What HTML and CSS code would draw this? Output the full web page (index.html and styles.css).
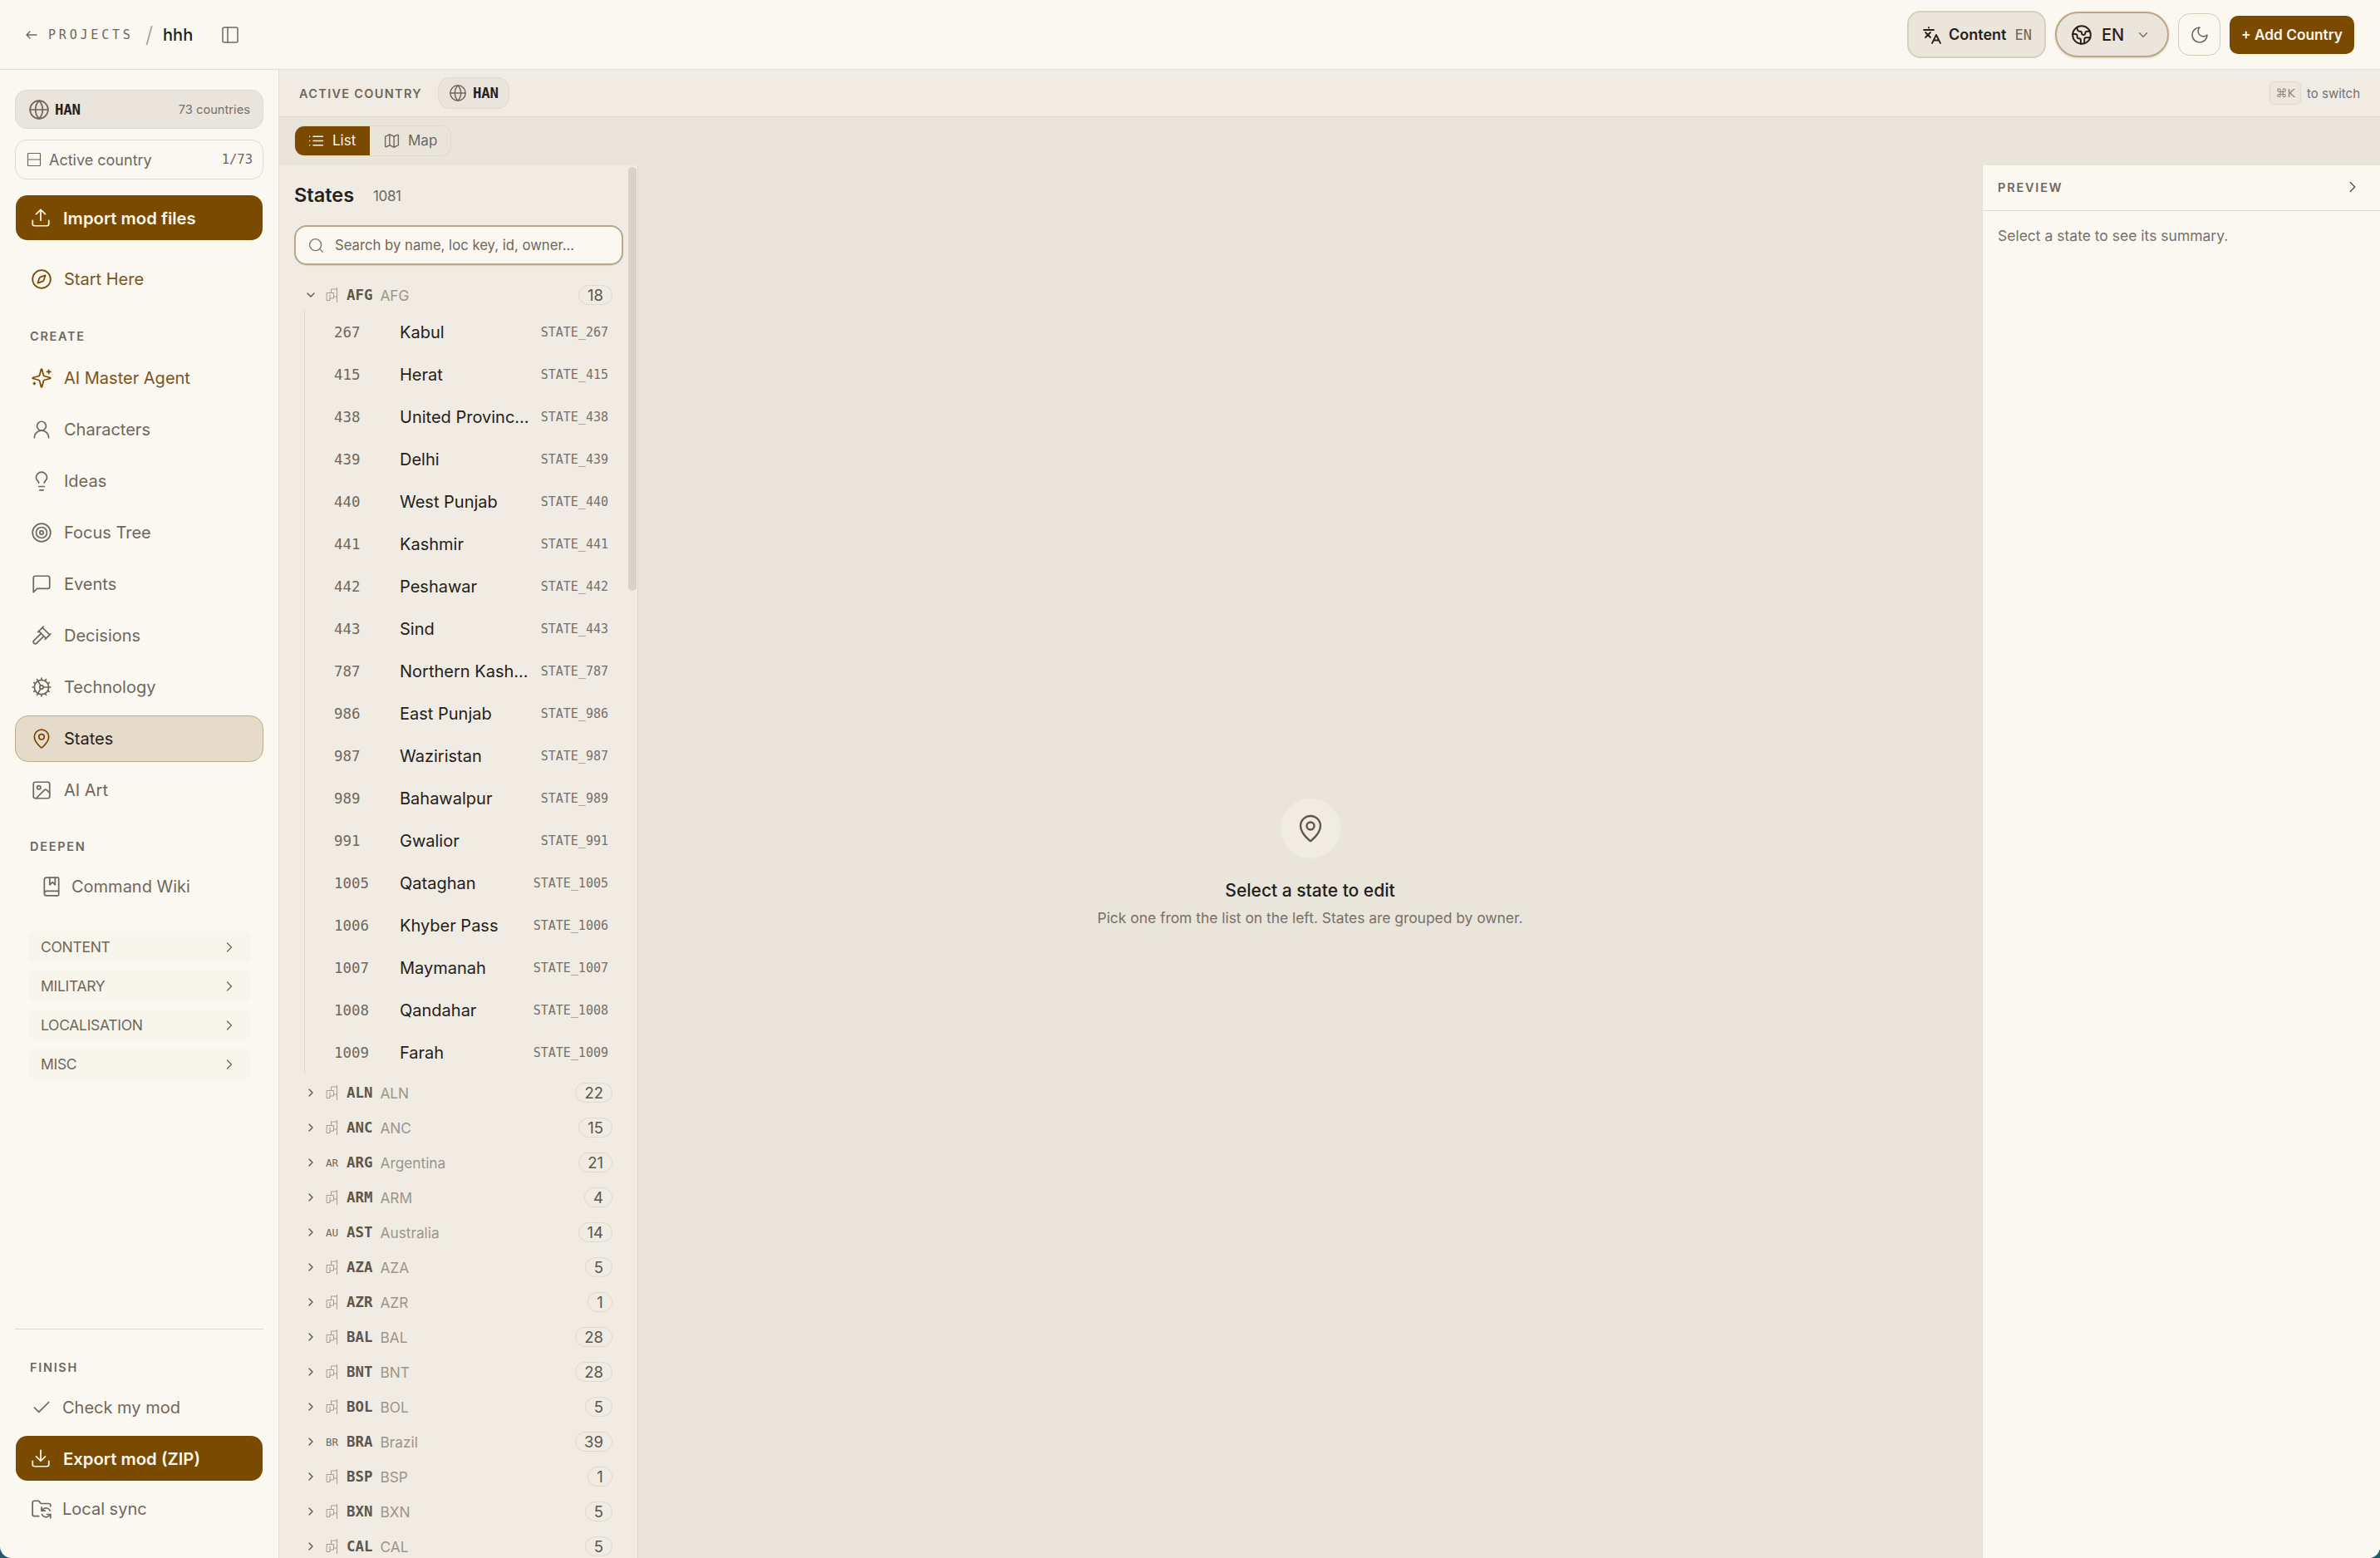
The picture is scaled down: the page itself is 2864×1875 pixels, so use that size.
FILE: index.html
```html
<!DOCTYPE html>
<html lang="en">
<head>
<meta charset="utf-8">
<title>hhh - States</title>
<link rel="stylesheet" href="styles.css">
</head>
<body>
<svg class="sprite" width="0" height="0" aria-hidden="true">
  <symbol id="i-arrow" viewBox="0 0 24 24"><path d="m9 18-6-6 6-6M3 12h18"/></symbol>
  <symbol id="i-panel" viewBox="0 0 24 24"><rect x="3" y="3" width="18" height="18" rx="2"/><path d="M9 3v18"/></symbol>
  <symbol id="i-lang" viewBox="0 0 24 24"><path d="M2 6h12M8 3v.5M4 9l6 6M10 9l-6 6M12 22l5-10 5 10M14 18.500h6"/></symbol>
  <symbol id="i-earth" viewBox="0 0 24 24"><path d="M21.54 15H17a2 2 0 0 0-2 2v4.54"/><path d="M7 3.34V5a3 3 0 0 0 3 3a2 2 0 0 1 2 2c0 1.1.9 2 2 2a2 2 0 0 0 2-2c0-1.1.9-2 2-2h3.17"/><path d="M11 21.95V18a2 2 0 0 0-2-2a2 2 0 0 1-2-2v-1a2 2 0 0 0-2-2H2.05"/><circle cx="12" cy="12" r="10"/></symbol>
  <symbol id="i-moon" viewBox="0 0 24 24"><path d="M12 3a6 6 0 0 0 9 9 9 9 0 1 1-9-9Z"/></symbol>
  <symbol id="i-chev-d" viewBox="0 0 24 24"><path d="m6 9 6 6 6-6"/></symbol>
  <symbol id="i-chev-r" viewBox="0 0 24 24"><path d="m9 18 6-6-6-6"/></symbol>
  <symbol id="i-globe" viewBox="0 0 24 24"><circle cx="12" cy="12" r="10"/><path d="M12 2a14.5 14.5 0 0 0 0 20 14.5 14.5 0 0 0 0-20M2 12h20"/></symbol>
  <symbol id="i-rows" viewBox="0 0 24 24"><rect x="3" y="3" width="18" height="18" rx="1"/><path d="M3 12h18"/></symbol>
  <symbol id="i-upload" viewBox="0 0 24 24"><path d="M12 3v12M17 8l-5-5-5 5M21 15v4a2 2 0 0 1-2 2H5a2 2 0 0 1-2-2v-4"/></symbol>
  <symbol id="i-download" viewBox="0 0 24 24"><path d="M12 15V3M21 15v4a2 2 0 0 1-2 2H5a2 2 0 0 1-2-2v-4M7 10l5 5 5-5"/></symbol>
  <symbol id="i-compass" viewBox="0 0 24 24"><path d="m16.24 7.76-1.804 5.411a2 2 0 0 1-1.265 1.265L7.76 16.24l1.804-5.411a2 2 0 0 1 1.265-1.265z"/><circle cx="12" cy="12" r="10"/></symbol>
  <symbol id="i-sparkles" viewBox="0 0 24 24"><path d="M9.937 15.5A2 2 0 0 0 8.5 14.063l-6.135-1.582a.5.5 0 0 1 0-.962L8.5 9.936A2 2 0 0 0 9.937 8.5l1.582-6.135a.5.5 0 0 1 .963 0L14.063 8.5A2 2 0 0 0 15.5 9.937l6.135 1.581a.5.5 0 0 1 0 .964L15.5 14.063a2 2 0 0 0-1.437 1.437l-1.582 6.135a.5.5 0 0 1-.963 0z"/><path d="M20 3v4M22 5h-4M4 17v2M5 18H3"/></symbol>
  <symbol id="i-user" viewBox="0 0 24 24"><circle cx="12" cy="8" r="5"/><path d="M20 21a8 8 0 0 0-16 0"/></symbol>
  <symbol id="i-bulb" viewBox="0 0 24 24"><path d="M15 14c.2-1 .7-1.7 1.5-2.5 1-.9 1.5-2.2 1.5-3.5A6 6 0 0 0 6 8c0 1 .2 2.2 1.5 3.5.7.7 1.3 1.5 1.5 2.5M9 18h6M10 22h4"/></symbol>
  <symbol id="i-target" viewBox="0 0 24 24"><circle cx="12" cy="12" r="10"/><circle cx="12" cy="12" r="6"/><circle cx="12" cy="12" r="2"/></symbol>
  <symbol id="i-msg" viewBox="0 0 24 24"><path d="M21 15a2 2 0 0 1-2 2H7l-4 4V5a2 2 0 0 1 2-2h14a2 2 0 0 1 2 2z"/></symbol>
  <symbol id="i-gavel" viewBox="0 0 24 24"><path d="m14.5 12.5-8 8a2.119 2.119 0 1 1-3-3l8-8M16 16l6-6M8 8l6-6M9 7l8 8M21 11l-8-8"/></symbol>
  <symbol id="i-cog" viewBox="0 0 24 24"><path d="M12 20a8 8 0 1 0 0-16 8 8 0 0 0 0 16Z"/><path d="M12 14a2 2 0 1 0 0-4 2 2 0 0 0 0 4Z"/><path d="M12 2v2M12 22v-2M17 20.66l-1-1.73M11 10.27 7 3.34M20.66 17l-1.73-1M3.34 7l1.73 1M14 12h8M2 12h2M20.66 7l-1.73 1M3.34 17l1.73-1M17 3.34l-1 1.73M11 13.73l-4 6.93"/></symbol>
  <symbol id="i-pin" viewBox="0 0 24 24"><path d="M20 10c0 4.993-5.539 10.193-7.399 11.799a1 1 0 0 1-1.202 0C9.539 20.193 4 14.993 4 10a8 8 0 0 1 16 0"/><circle cx="12" cy="10" r="3"/></symbol>
  <symbol id="i-image" viewBox="0 0 24 24"><rect x="3" y="3" width="18" height="18" rx="2"/><circle cx="9" cy="9" r="2"/><path d="m21 15-3.086-3.086a2 2 0 0 0-2.828 0L6 21"/></symbol>
  <symbol id="i-book" viewBox="0 0 24 24"><path d="M10 2v8l3-3 3 3V2"/><path d="M4 19.5v-15A2.5 2.5 0 0 1 6.5 2H19a1 1 0 0 1 1 1v18a1 1 0 0 1-1 1H6.5a1 1 0 0 1 0-5H20"/></symbol>
  <symbol id="i-check" viewBox="0 0 24 24"><path d="M20 6 9 17l-5-5"/></symbol>
  <symbol id="i-sync" viewBox="0 0 24 24"><path d="M9 20H4a2 2 0 0 1-2-2V5a2 2 0 0 1 2-2h3.9a2 2 0 0 1 1.69.9l.81 1.2a2 2 0 0 0 1.69.9H20a2 2 0 0 1 2 2v1"/><path d="M12 10v4h4M12 14l1.535-1.605a5 5 0 0 1 8 1.5M22 22v-4h-4M22 18l-1.535 1.605a5 5 0 0 1-8-1.5"/></symbol>
  <symbol id="i-list" viewBox="0 0 24 24"><path d="M3 12h.01M3 18h.01M3 6h.01M8 12h13M8 18h13M8 6h13"/></symbol>
  <symbol id="i-map" viewBox="0 0 24 24"><path d="M14.106 5.553a2 2 0 0 0 1.788 0l3.659-1.83A1 1 0 0 1 21 4.619v12.764a1 1 0 0 1-.553.894l-4.553 2.277a2 2 0 0 1-1.788 0l-4.212-2.106a2 2 0 0 0-1.788 0l-3.659 1.83A1 1 0 0 1 3 19.381V6.618a1 1 0 0 1 .553-.894l4.553-2.277a2 2 0 0 1 1.788 0z"/><path d="M15 5.764v15M9 3.236v15"/></symbol>
  <symbol id="i-search" viewBox="0 0 24 24"><path d="m21 21-4.34-4.34"/><circle cx="11" cy="11" r="8"/></symbol>
  <symbol id="i-flag" viewBox="0 0 15 20"><path d="M13.500 1.500v17M13.500 3H6.500v4.500M13.500 12H9.500M1.500 7.500H9.500V14H5v2.500H1.500zM5 10v4"/></symbol>
</svg>

<div class="app">
  <header class="topbar">
    <div class="crumbs">
      <svg class="ic ic-arrow"><use href="#i-arrow"/></svg>
      <span class="crumb-link">PROJECTS</span>
      <span class="crumb-sep">/</span>
      <span class="crumb-name">hhh</span>
      <svg class="ic ic-panel"><use href="#i-panel"/></svg>
    </div>
    <div class="top-actions">
      <button class="btn-content"><svg class="ic ic-lang"><use href="#i-lang"/></svg><span class="btn-content-label">Content</span><span class="btn-content-code">EN</span></button>
      <button class="btn-lang"><svg class="ic ic-earth"><use href="#i-earth"/></svg><span class="btn-lang-label">EN</span><svg class="ic ic-langchev"><use href="#i-chev-d"/></svg></button>
      <button class="btn-moon"><svg class="ic ic-moon"><use href="#i-moon"/></svg></button>
      <button class="btn-add">+ Add Country</button>
    </div>
  </header>

  <div class="body">
    <aside class="sidebar">
      <div class="country-chip">
        <svg class="ic ic-chip"><use href="#i-globe"/></svg>
        <span class="mono-strong">HAN</span>
        <span class="chip-count">73 countries</span>
      </div>
      <div class="active-row">
        <svg class="ic ic-rows"><use href="#i-rows"/></svg>
        <span class="active-label">Active country</span>
        <span class="active-count">1/73</span>
      </div>
      <button class="primary primary-import"><svg class="ic ic-nav"><use href="#i-upload"/></svg>Import mod files</button>

      <a class="nav nav-accent nav-first"><svg class="ic ic-nav"><use href="#i-compass"/></svg>Start Here</a>

      <div class="section-label section-create">CREATE</div>
      <nav class="nav-group">
        <a class="nav nav-accent"><svg class="ic ic-nav"><use href="#i-sparkles"/></svg>AI Master Agent</a>
        <a class="nav"><svg class="ic ic-nav"><use href="#i-user"/></svg>Characters</a>
        <a class="nav"><svg class="ic ic-nav"><use href="#i-bulb"/></svg>Ideas</a>
        <a class="nav"><svg class="ic ic-nav"><use href="#i-target"/></svg>Focus Tree</a>
        <a class="nav"><svg class="ic ic-nav"><use href="#i-msg"/></svg>Events</a>
        <a class="nav"><svg class="ic ic-nav"><use href="#i-gavel"/></svg>Decisions</a>
        <a class="nav"><svg class="ic ic-nav"><use href="#i-cog"/></svg>Technology</a>
        <a class="nav nav-active"><svg class="ic ic-nav ic-active"><use href="#i-pin"/></svg>States</a>
        <a class="nav"><svg class="ic ic-nav"><use href="#i-image"/></svg>AI Art</a>
      </nav>

      <div class="section-label section-deepen">DEEPEN</div>
      <a class="nav nav-indent"><svg class="ic ic-nav"><use href="#i-book"/></svg>Command Wiki</a>

      <div class="collapsibles">
        <div class="collapse">CONTENT<svg class="ic ic-collapse"><use href="#i-chev-r"/></svg></div>
        <div class="collapse">MILITARY<svg class="ic ic-collapse"><use href="#i-chev-r"/></svg></div>
        <div class="collapse">LOCALISATION<svg class="ic ic-collapse"><use href="#i-chev-r"/></svg></div>
        <div class="collapse">MISC<svg class="ic ic-collapse"><use href="#i-chev-r"/></svg></div>
      </div>

      <div class="side-footer">
        <div class="section-label">FINISH</div>
        <div class="footer-stack">
          <a class="nav nav-tight"><svg class="ic ic-nav"><use href="#i-check"/></svg>Check my mod</a>
          <button class="primary"><svg class="ic ic-nav"><use href="#i-download"/></svg>Export mod (ZIP)</button>
          <a class="nav nav-tight"><svg class="ic ic-nav"><use href="#i-sync"/></svg>Local sync</a>
        </div>
      </div>
    </aside>

    <main class="workspace">
      <div class="subbar">
        <span class="subbar-label">ACTIVE COUNTRY</span>
        <span class="subbar-chip"><svg class="ic ic-sub"><use href="#i-globe"/></svg><span class="mono-strong">HAN</span></span>
        <span class="subbar-hint"><kbd class="kbd">⌘K</kbd>to switch</span>
      </div>
      <div class="toolbar">
        <div class="toggle">
          <span class="seg seg-on"><svg class="ic ic-seg"><use href="#i-list"/></svg>List</span>
          <span class="seg seg-off"><svg class="ic ic-seg"><use href="#i-map"/></svg>Map</span>
        </div>
      </div>
      <div class="content">
        <section class="list-panel">
          <div class="list-head"><h2 class="list-title">States</h2><span class="list-count">1081</span></div>
          <div class="search"><svg class="ic ic-search"><use href="#i-search"/></svg><span class="search-ph">Search by name, loc key, id, owner...</span></div>

          <div class="group"><svg class="ic ic-gchev"><use href="#i-chev-d"/></svg><svg class="ic ic-flag"><use href="#i-flag"/></svg><span class="g-code">AFG</span><span class="g-name">AFG</span><span class="badge">18</span></div>
          <div class="rows">
            <div class="row"><span class="r-id">267</span><span class="r-name">Kabul</span><span class="r-key">STATE_267</span></div>
            <div class="row"><span class="r-id">415</span><span class="r-name">Herat</span><span class="r-key">STATE_415</span></div>
            <div class="row"><span class="r-id">438</span><span class="r-name">United Provinces</span><span class="r-key">STATE_438</span></div>
            <div class="row"><span class="r-id">439</span><span class="r-name">Delhi</span><span class="r-key">STATE_439</span></div>
            <div class="row"><span class="r-id">440</span><span class="r-name">West Punjab</span><span class="r-key">STATE_440</span></div>
            <div class="row"><span class="r-id">441</span><span class="r-name">Kashmir</span><span class="r-key">STATE_441</span></div>
            <div class="row"><span class="r-id">442</span><span class="r-name">Peshawar</span><span class="r-key">STATE_442</span></div>
            <div class="row"><span class="r-id">443</span><span class="r-name">Sind</span><span class="r-key">STATE_443</span></div>
            <div class="row"><span class="r-id">787</span><span class="r-name">Northern Kashmir</span><span class="r-key">STATE_787</span></div>
            <div class="row"><span class="r-id">986</span><span class="r-name">East Punjab</span><span class="r-key">STATE_986</span></div>
            <div class="row"><span class="r-id">987</span><span class="r-name">Waziristan</span><span class="r-key">STATE_987</span></div>
            <div class="row"><span class="r-id">989</span><span class="r-name">Bahawalpur</span><span class="r-key">STATE_989</span></div>
            <div class="row"><span class="r-id">991</span><span class="r-name">Gwalior</span><span class="r-key">STATE_991</span></div>
            <div class="row"><span class="r-id">1005</span><span class="r-name">Qataghan</span><span class="r-key">STATE_1005</span></div>
            <div class="row"><span class="r-id">1006</span><span class="r-name">Khyber Pass</span><span class="r-key">STATE_1006</span></div>
            <div class="row"><span class="r-id">1007</span><span class="r-name">Maymanah</span><span class="r-key">STATE_1007</span></div>
            <div class="row"><span class="r-id">1008</span><span class="r-name">Qandahar</span><span class="r-key">STATE_1008</span></div>
            <div class="row"><span class="r-id">1009</span><span class="r-name">Farah</span><span class="r-key">STATE_1009</span></div>
          </div>

          <div class="group"><svg class="ic ic-gchev"><use href="#i-chev-r"/></svg><svg class="ic ic-flag"><use href="#i-flag"/></svg><span class="g-code">ALN</span><span class="g-name">ALN</span><span class="badge">22</span></div>
          <div class="group"><svg class="ic ic-gchev"><use href="#i-chev-r"/></svg><svg class="ic ic-flag"><use href="#i-flag"/></svg><span class="g-code">ANC</span><span class="g-name">ANC</span><span class="badge">15</span></div>
          <div class="group"><svg class="ic ic-gchev"><use href="#i-chev-r"/></svg><span class="g-iso">AR</span><span class="g-code">ARG</span><span class="g-name">Argentina</span><span class="badge">21</span></div>
          <div class="group"><svg class="ic ic-gchev"><use href="#i-chev-r"/></svg><svg class="ic ic-flag"><use href="#i-flag"/></svg><span class="g-code">ARM</span><span class="g-name">ARM</span><span class="badge">4</span></div>
          <div class="group"><svg class="ic ic-gchev"><use href="#i-chev-r"/></svg><span class="g-iso">AU</span><span class="g-code">AST</span><span class="g-name">Australia</span><span class="badge">14</span></div>
          <div class="group"><svg class="ic ic-gchev"><use href="#i-chev-r"/></svg><svg class="ic ic-flag"><use href="#i-flag"/></svg><span class="g-code">AZA</span><span class="g-name">AZA</span><span class="badge">5</span></div>
          <div class="group"><svg class="ic ic-gchev"><use href="#i-chev-r"/></svg><svg class="ic ic-flag"><use href="#i-flag"/></svg><span class="g-code">AZR</span><span class="g-name">AZR</span><span class="badge">1</span></div>
          <div class="group"><svg class="ic ic-gchev"><use href="#i-chev-r"/></svg><svg class="ic ic-flag"><use href="#i-flag"/></svg><span class="g-code">BAL</span><span class="g-name">BAL</span><span class="badge">28</span></div>
          <div class="group"><svg class="ic ic-gchev"><use href="#i-chev-r"/></svg><svg class="ic ic-flag"><use href="#i-flag"/></svg><span class="g-code">BNT</span><span class="g-name">BNT</span><span class="badge">28</span></div>
          <div class="group"><svg class="ic ic-gchev"><use href="#i-chev-r"/></svg><svg class="ic ic-flag"><use href="#i-flag"/></svg><span class="g-code">BOL</span><span class="g-name">BOL</span><span class="badge">5</span></div>
          <div class="group"><svg class="ic ic-gchev"><use href="#i-chev-r"/></svg><span class="g-iso">BR</span><span class="g-code">BRA</span><span class="g-name">Brazil</span><span class="badge">39</span></div>
          <div class="group"><svg class="ic ic-gchev"><use href="#i-chev-r"/></svg><svg class="ic ic-flag"><use href="#i-flag"/></svg><span class="g-code">BSP</span><span class="g-name">BSP</span><span class="badge">1</span></div>
          <div class="group"><svg class="ic ic-gchev"><use href="#i-chev-r"/></svg><svg class="ic ic-flag"><use href="#i-flag"/></svg><span class="g-code">BXN</span><span class="g-name">BXN</span><span class="badge">5</span></div>
          <div class="group"><svg class="ic ic-gchev"><use href="#i-chev-r"/></svg><svg class="ic ic-flag"><use href="#i-flag"/></svg><span class="g-code">CAL</span><span class="g-name">CAL</span><span class="badge">5</span></div>

          <div class="scroll-thumb"></div>
        </section>

        <section class="empty">
          <div class="empty-icon"><svg class="ic ic-empty"><use href="#i-pin"/></svg></div>
          <div class="empty-title">Select a state to edit</div>
          <div class="empty-sub">Pick one from the list on the left. States are grouped by owner.</div>
        </section>

        <aside class="preview">
          <div class="preview-head"><span class="preview-label">PREVIEW</span><svg class="ic ic-prev"><use href="#i-chev-r"/></svg></div>
          <p class="preview-text">Select a state to see its summary.</p>
        </aside>
      </div>
    </main>
  </div>
</div>
</body>
</html>
```

FILE: styles.css
```css
* { box-sizing: border-box; }
html, body { margin: 0; height: 100%; }
body {
  background: #1f5a68;
  font-family: "Inter", "Liberation Sans", sans-serif;
  color: #2a251e;
  overflow: hidden;
}
.sprite { position: absolute; }
.ic {
  display: block;
  flex: none;
  fill: none;
  stroke: currentColor;
  stroke-width: 1.6;
  stroke-linecap: round;
  stroke-linejoin: round;
}
button { font-family: inherit; cursor: pointer; }

.app {
  height: 1875px;
  display: flex;
  flex-direction: column;
  background: #fbf8f1;
  border-radius: 0 0 14px 14px;
  overflow: hidden;
}

/* Top bar */
.topbar {
  height: 84px;
  flex: none;
  display: flex;
  align-items: center;
  justify-content: space-between;
  padding: 0 31px 0 30px;
  border-bottom: 1px solid #e3dfd6;
}
.crumbs { display: flex; align-items: center; color: #6f675c; }
.ic-arrow { width: 16px; height: 16px; margin-right: 12px; stroke-width: 2; }
.crumb-link { font-family: "DejaVu Sans Mono", monospace; font-size: 15px; letter-spacing: 3.800px; width: 104px; white-space: nowrap; color: #6f675c; }
.crumb-sep { font-size: 26px; font-weight: 300; color: #a49d91; margin: 0 12px 0 13px; }
.crumb-name { font-size: 20px; font-weight: 500; color: #25201a; }
.ic-panel { width: 24px; height: 24px; margin-left: 33px; stroke-width: 1.5; }

.top-actions { display: flex; align-items: center; gap: 11px; }
.btn-content {
  width: 167px; height: 57px;
  display: flex; align-items: center;
  padding: 0 0 0 16px;
  background: #ebe6db;
  border: 2px solid #d9cfbd;
  border-radius: 16px;
  color: #25201a;
}
.ic-lang { width: 24px; height: 24px; margin-right: 8px; stroke-width: 1.8; }
.btn-content-label { font-size: 18px; font-weight: 600; margin-right: 10px; }
.btn-content-code { font-family: "DejaVu Sans Mono", monospace; font-size: 17px; color: #6f675c; }
.btn-lang {
  width: 137px; height: 55px;
  display: flex; align-items: center;
  padding: 0 0 0 17px;
  background: #ebe6db;
  border: 2px solid #bda683;
  border-radius: 28px;
  box-shadow: 0 1px 3px rgba(90, 70, 30, .2);
  color: #25201a;
}
.ic-earth { width: 26px; height: 26px; margin-right: 11px; stroke-width: 1.8; }
.btn-lang-label { font-size: 20px; font-weight: 500; margin-right: 14px; }
.ic-langchev { width: 18px; height: 18px; color: #6f675c; }
.btn-moon {
  width: 51px; height: 51px;
  display: flex; align-items: center; justify-content: center;
  padding: 0;
  background: #fbf8f1;
  border: 1px solid #d7cbb7;
  border-radius: 14px;
  color: #6f675c;
}
.ic-moon { width: 24px; height: 24px; }
.btn-add {
  width: 150px; height: 46px;
  padding: 0;
  background: #7a4a00;
  border: 0;
  border-radius: 10px;
  color: #fbf6ea;
  font-size: 17.300px;
  font-weight: 600;
}

/* Layout */
.body { flex: 1; display: flex; min-height: 0; }

/* Sidebar */
.sidebar {
  width: 336px;
  flex: none;
  display: flex;
  flex-direction: column;
  padding: 24px 18px 31px;
  border-right: 1px solid #e3dfd6;
}
.country-chip {
  height: 47px;
  display: flex; align-items: center;
  padding: 0 15px;
  background: #e9e5dc;
  border: 1px solid #dfdad0;
  border-radius: 14px;
  color: #6f675c;
}
.ic-chip { width: 26px; height: 26px; margin-right: 6px; }
.mono-strong { font-family: "DejaVu Sans Mono", monospace; font-weight: 700; font-size: 17.400px; letter-spacing: -.2px; color: #25201a; }
.chip-count { margin-left: auto; font-size: 14.700px; color: #77706a; }
.active-row {
  height: 48px;
  margin-top: 13px;
  display: flex; align-items: center;
  padding: 0 12px;
  border: 1px solid #dfdad0;
  border-radius: 14px;
  color: #6f675c;
}
.ic-rows { width: 20px; height: 20px; margin-right: 8px; stroke-width: 1.4; }
.active-label { font-size: 18px; }
.active-count { margin-left: auto; font-family: "DejaVu Sans Mono", monospace; font-size: 15.500px; }
.primary {
  height: 54px;
  margin: 0 1px;
  display: flex; align-items: center; gap: 14px;
  padding: 0 0 0 17px;
  background: #7a4a00;
  border: 0;
  border-radius: 14px;
  color: #fbf6ea;
  font-size: 20.300px;
  font-weight: 600;
  flex: none;
}
.primary-import { margin-top: 19px; }
.ic-nav { width: 26px; height: 26px; }
.nav {
  height: 56px;
  flex: none;
  display: flex; align-items: center; gap: 14px;
  padding: 0 18px;
  border: 1px solid transparent;
  border-radius: 16px;
  color: #6f675c;
  font-size: 20px;
}
.nav .ic-nav { color: #6f675c; }
.nav-accent { color: #7a5520; }
.nav-accent .ic-nav { color: #7a4a00; }
.nav-first { margin-top: 19px; }
.nav-group { display: flex; flex-direction: column; gap: 6px; }
.nav-active { background: #e6dbca; border-color: #c2aa86; color: #25201a; }
.nav .ic-active { color: #7a4a00; }
.nav-indent { padding-left: 30px; gap: 11px; margin-top: 10px; }
.section-label {
  height: 20px;
  line-height: 20px;
  padding-left: 18px;
  font-size: 14.500px;
  font-weight: 600;
  letter-spacing: 1.700px;
  color: #6f675c;
}
.section-create { margin: 31px 0 12px; }
.section-deepen { margin-top: 30px; }
.collapsibles {
  margin: 26px 15px 0 16px;
  display: flex; flex-direction: column; gap: 10px;
}
.collapse {
  height: 37px;
  display: flex; align-items: center; justify-content: space-between;
  padding: 0 16px 0 15px;
  background: #f8f5ed;
  border-radius: 8px;
  color: #6f675c;
  font-size: 17.500px;
  letter-spacing: -.3px;
}
.ic-collapse { width: 20px; height: 20px; }
.side-footer {
  margin-top: auto;
  padding-top: 36px;
  border-top: 1px solid #dedad0;
}
.footer-stack { display: flex; flex-direction: column; gap: 6px; margin-top: 10px; }
.nav-tight { gap: 12px; }

/* Workspace */
.workspace { flex: 1; min-width: 0; display: flex; flex-direction: column; background: #e9e5da; }
.subbar {
  height: 57px;
  flex: none;
  display: flex; align-items: center;
  padding: 0 24px;
  background: #f0ece4;
  border-bottom: 1px solid #e0dcd2;
}
.subbar-label { font-size: 14.500px; font-weight: 600; letter-spacing: 1.300px; color: #6f675c; }
.subbar-chip {
  height: 38px;
  margin-left: 19px;
  display: flex; align-items: center; gap: 7px;
  padding: 0 12px;
  background: #e9e5dc;
  border: 1px solid #dfdad0;
  border-radius: 14px;
  color: #6f675c;
}
.ic-sub { width: 22px; height: 22px; }
.subbar-hint { margin-left: auto; display: flex; align-items: center; gap: 7px; font-size: 15px; color: #77706a; }
.kbd {
  width: 38px; height: 28px;
  display: flex; align-items: center; justify-content: center;
  border: 1px solid #dfdad0;
  border-radius: 6px;
  background: #ece8df;
  font-family: "DejaVu Sans", sans-serif;
  font-size: 14px;
  color: #8d867b;
}
.toolbar {
  height: 58px;
  flex: none;
  display: flex; align-items: center;
  padding: 0 18px 2px;
}
.toggle {
  height: 37px;
  width: 189px;
  display: flex;
  border: 1px solid #dfdad0;
  border-radius: 12px;
  overflow: hidden;
}
.seg {
  display: flex; align-items: center; gap: 9px;
  padding: 0 15px;
  font-size: 17px;
  color: #6f675c;
}
.seg-on { width: 90px; background: #7a4a00; color: #fbf6ea; }
.seg-off { padding-left: 16px; }
.ic-seg { width: 21px; height: 21px; }
.content { flex: 1; min-height: 0; display: flex; }

/* List panel */
.list-panel {
  position: relative;
  width: 432px;
  flex: none;
  padding: 0 0 0 18px;
  background: #f0ece3;
  border-right: 1px solid #dcd7cc;
  overflow: hidden;
}
.list-head { height: 72px; padding-bottom: 2px; display: flex; align-items: center; gap: 23px; }
.list-title { margin: 0; font-size: 23.500px; font-weight: 600; color: #25201a; }
.list-count { font-size: 17px; letter-spacing: -.4px; color: #6f675c; padding-top: 4px; }
.search {
  width: 396px; height: 48px;
  display: flex; align-items: center;
  padding: 0 14px;
  background: #fbf8f2;
  border: 2px solid #b9a78e;
  border-radius: 15px;
  box-shadow: 0 1px 1px rgba(90, 70, 30, .15);
  color: #6f675c;
}
.ic-search { width: 21px; height: 21px; margin-right: 12px; color: #817a70; }
.search-ph { font-size: 16.700px; color: #6f675c; }
.group {
  height: 38px;
  width: 383px;
  margin-top: 4px;
  display: flex; align-items: center;
  padding-left: 12px;
}
.search + .group { margin-top: 17px; }
.ic-gchev { width: 16px; height: 16px; margin-right: 10px; color: #5d564c; stroke-width: 2; }
.ic-flag { width: 15px; height: 20px; margin-right: 10px; color: #a39c90; stroke-width: 1; }
.g-iso { font-family: "DejaVu Sans Mono", monospace; font-size: 12.500px; color: #6f675c; margin-right: 10px; }
.g-code { font-family: "DejaVu Sans Mono", monospace; font-size: 17.400px; font-weight: 700; color: #5d564c; margin-right: 9px; }
.g-name { font-size: 17.300px; color: #9c958a; }
.badge {
  margin-left: auto;
  height: 24px;
  min-width: 30px;
  padding: 0 10px;
  display: flex; align-items: center; justify-content: center;
  border: 1px solid #dfdad0;
  border-radius: 12px;
  font-size: 18.500px;
  color: #5d564c;
}
.rows { margin-left: 12px; width: 366px; border-left: 1px solid #dcd7cc; }
.row {
  height: 51px;
  display: flex; align-items: center;
  padding-left: 35px;
}
.r-id { width: 79px; flex: none; font-family: "DejaVu Sans Mono", monospace; font-size: 17.400px; color: #6f675c; }
.r-name {
  width: 156px; flex: none;
  white-space: nowrap; overflow: hidden; text-overflow: ellipsis;
  font-size: 20px; color: #25201a;
}
.r-key { margin-left: auto; font-family: "DejaVu Sans Mono", monospace; font-size: 15px; color: #77706a; }
.scroll-thumb {
  position: absolute;
  top: 2px; right: 1px;
  width: 10px; height: 510px;
  border-radius: 5px;
  background: #d8d3c9;
}

/* Empty state */
.empty {
  flex: 1; min-width: 0;
  padding-top: 3px;
  display: flex; flex-direction: column; align-items: center; justify-content: center;
}
.empty-icon {
  width: 72px; height: 72px;
  display: flex; align-items: center; justify-content: center;
  border-radius: 50%;
  background: #f0ece3;
  color: #5d564c;
}
.ic-empty { width: 36px; height: 36px; stroke-width: 1.6; }
.empty-title { margin-top: 26px; font-size: 21px; font-weight: 500; color: #25201a; line-height: 26px; }
.empty-sub { margin-top: 8px; font-size: 17.400px; color: #77706a; line-height: 24px; }

/* Preview */
.preview { width: 479px; flex: none; background: #fbf8f2; border-left: 1px solid #e3dfd6; }
.preview-head {
  height: 55px;
  display: flex; align-items: center; justify-content: space-between;
  padding: 0 22px 2px 18px;
  border-bottom: 1px solid #dedad0;
}
.preview-label { font-size: 14.500px; font-weight: 600; letter-spacing: 1.800px; color: #6f675c; }
.ic-prev { width: 22px; height: 22px; color: #5d564c; }
.preview-text { margin: 18px 0 0 18px; font-size: 17.500px; line-height: 24px; color: #77706a; }
```
